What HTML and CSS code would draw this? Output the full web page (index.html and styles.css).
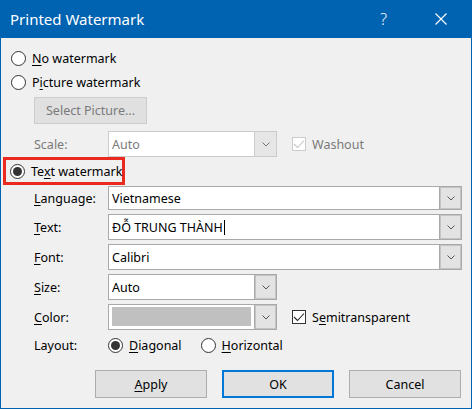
FILE: index.html
```html
<!DOCTYPE html>
<html>
<head>
<meta charset="utf-8">
<link rel="stylesheet" href="styles.css">
</head>
<body>
<div class="window">
  <div class="titlebar">
    <span class="title">Printed Watermark</span>
    <span class="help">?</span>
    <svg class="close" width="12" height="12" viewBox="0 0 12 12"><path d="M0.5 0.5 L11.5 11.5 M11.5 0.5 L0.5 11.5" stroke="#fff" stroke-width="1.1" fill="none"/></svg>
  </div>
  <div class="content">
    <div class="radio-row r-no"><span class="radio"></span><span class="rtext"><u>N</u>o watermark</span></div>
    <div class="radio-row r-pic"><span class="radio"></span><span class="rtext">P<u>i</u>cture watermark</span></div>
    <div class="indent"><div class="btn btn-select">Select Picture...</div></div>
    <div class="form-row row-scale">
      <span class="label dis">Scale:</span>
      <div class="combo combo-short combo-dis"><span class="ctext dis">Auto</span><span class="drop drop-dis"><svg width="8" height="5" viewBox="0 0 8 5"><path d="M0.5 0.5 L4 4 L7.5 0.5" stroke="#777" fill="none"/></svg></span></div>
      <span class="check check-dis"><svg width="12" height="10" viewBox="0 0 12 10"><path d="M1 5 L4.5 8.5 L11 1.5" stroke="#c6c6c6" stroke-width="1.1" fill="none"/></svg></span>
      <span class="ctl-text dis">Washout</span>
    </div>
    <div class="redbox"><span class="radio on"></span><span class="rtext">Te<u>x</u>t watermark</span></div>
    <div class="form-row row-lang">
      <span class="label"><u>L</u>anguage:</span>
      <div class="combo combo-long"><span class="ctext">Vietnamese</span><span class="drop"><svg width="8" height="5" viewBox="0 0 8 5"><path d="M0.5 0.5 L4 4 L7.5 0.5" stroke="#555" fill="none"/></svg></span></div>
    </div>
    <div class="form-row row-std">
      <span class="label"><u>T</u>ext:</span>
      <div class="combo combo-long"><span class="ctext">ĐỖ TRUNG THÀNH<span class="caret"></span></span><span class="drop"><svg width="8" height="5" viewBox="0 0 8 5"><path d="M0.5 0.5 L4 4 L7.5 0.5" stroke="#555" fill="none"/></svg></span></div>
    </div>
    <div class="form-row row-std">
      <span class="label"><u>F</u>ont:</span>
      <div class="combo combo-long"><span class="ctext">Calibri</span><span class="drop"><svg width="8" height="5" viewBox="0 0 8 5"><path d="M0.5 0.5 L4 4 L7.5 0.5" stroke="#555" fill="none"/></svg></span></div>
    </div>
    <div class="form-row row-std">
      <span class="label"><u>S</u>ize:</span>
      <div class="combo combo-short"><span class="ctext">Auto</span><span class="drop"><svg width="8" height="5" viewBox="0 0 8 5"><path d="M0.5 0.5 L4 4 L7.5 0.5" stroke="#555" fill="none"/></svg></span></div>
    </div>
    <div class="form-row row-std">
      <span class="label"><u>C</u>olor:</span>
      <div class="combo combo-short"><span class="swatch"></span><span class="drop"><svg width="8" height="5" viewBox="0 0 8 5"><path d="M0.5 0.5 L4 4 L7.5 0.5" stroke="#555" fill="none"/></svg></span></div>
      <span class="check"><svg width="12" height="10" viewBox="0 0 12 10"><path d="M1 5 L4.5 8.5 L11 1.5" stroke="#222" stroke-width="1.1" fill="none"/></svg></span>
      <span class="ctl-text">S<u>e</u>mitransparent</span>
    </div>
    <div class="form-row row-layout">
      <span class="label">Layout:</span>
      <span class="radio on"></span><span class="rtext"><u>D</u>iagonal</span>
      <span class="radio r-h"></span><span class="rtext"><u>H</u>orizontal</span>
    </div>
    <div class="buttons">
      <div class="btn btn-act"><span><u>A</u>pply</span></div>
      <div class="btn btn-act btn-ok">OK</div>
      <div class="btn btn-act">Cancel</div>
    </div>
  </div>
</div>
</body>
</html>
```

FILE: styles.css
```css
* { box-sizing: border-box; }
html, body { margin: 0; padding: 0; background: #ffffff; }
body {
  font-family: "Noto Sans", "Open Sans", sans-serif;
  font-size: 12.5px;
  color: #000;
}
u { text-decoration: underline; text-underline-offset: 1.5px; text-decoration-thickness: 1px; }

.window {
  width: 472px;
  height: 409px;
  background: #f0f0f0;
  border-left: 1px solid #0063b1;
  border-right: 1px solid #0063b1;
  border-bottom: 1px solid #0063b1;
}
.titlebar {
  height: 38px;
  margin: 0 -1px;
  background: #0063b1;
  color: #fff;
  display: flex;
  align-items: center;
  padding-left: 10px;
}
.title { font-size: 15px; flex: 1; padding-bottom: 1px; }
.help { font-size: 16px; margin-right: 48px; font-weight: 300; padding-bottom: 1px; }
.close { margin-right: 25px; }

.content { display: flex; flex-direction: column; }

.radio {
  width: 15px; height: 15px;
  border: 1px solid #333;
  border-radius: 50%;
  background: #fff;
  flex: none;
  position: relative;
}
.radio.on::after {
  content: "";
  position: absolute;
  left: 2px; top: 2px;
  width: 9px; height: 9px;
  border-radius: 50%;
  background: #333;
}
.rtext { margin-left: 6px; white-space: nowrap; }

.radio-row { display: flex; align-items: center; padding-left: 10px; }
.r-no { margin-top: 8px; height: 24px; }
.r-pic { height: 25px; }

.indent { padding-left: 33px; margin-top: 2px; display: flex; }
.btn {
  display: flex; align-items: center; justify-content: center;
  background: #e1e1e1;
  border: 1px solid #adadad;
  white-space: nowrap;
}
.btn-select {
  width: 113px; height: 27px;
  background: #e0e0e0;
  border-color: #cccccc;
  color: #7a7a7a;
}

.form-row { display: flex; align-items: center; padding-left: 33px; padding-right: 9px; }
.label { width: 74px; flex: none; white-space: nowrap; }
.dis { color: #7a7a7a; }
.row-scale { margin-top: 7px; height: 26px; }
.row-lang { margin-top: 1px; height: 24px; }
.row-std { margin-top: 4px; height: 26px; }
.row-layout { margin-top: 3px; height: 25px; }

.combo {
  height: 100%;
  display: flex;
  align-items: stretch;
  border: 1px solid #a9a9a9;
  background: #fff;
}
.combo-long { flex: 1; }
.combo-short { width: 169px; }
.combo-dis { border-color: #cccccc; }
.ctext { flex: 1; padding-left: 3px; display: flex; align-items: center; white-space: nowrap; }
.caret { display: inline-block; width: 1px; height: 15px; background: #000; margin-left: 1px; }
.drop {
  width: 22px; flex: none;
  display: flex; align-items: center; justify-content: center;
  background: #e3e3e3;
  border-left: 1px solid #a9a9a9;
  box-shadow: inset 0 0 0 1px #c4c4c4;
}
.drop-dis { border-left-color: #cccccc; background: #e6e6e6; box-shadow: none; }
.swatch { flex: 1; margin: 2px 3px 3px 3px; background: #c0c0c0; }

.check {
  width: 14px; height: 14px;
  margin-left: 15px;
  border: 1px solid #333;
  background: #fff;
  display: flex; align-items: center; justify-content: center;
  flex: none;
}
.check-dis { border-color: #cccccc; }
.ctl-text { margin-left: 6px; white-space: nowrap; }

.redbox {
  margin-left: 2px;
  width: 122px; height: 28px;
  border: 3px solid #ea2a1f;
  display: flex; align-items: center;
  padding-left: 4px;
}

.r-h { margin-left: 19px; }

.buttons { display: flex; margin-top: 12px; padding-left: 94px; gap: 15px; }
.btn-act { width: 112px; height: 28px; }
.btn-ok { border: 2px solid #0078d7; }
```
